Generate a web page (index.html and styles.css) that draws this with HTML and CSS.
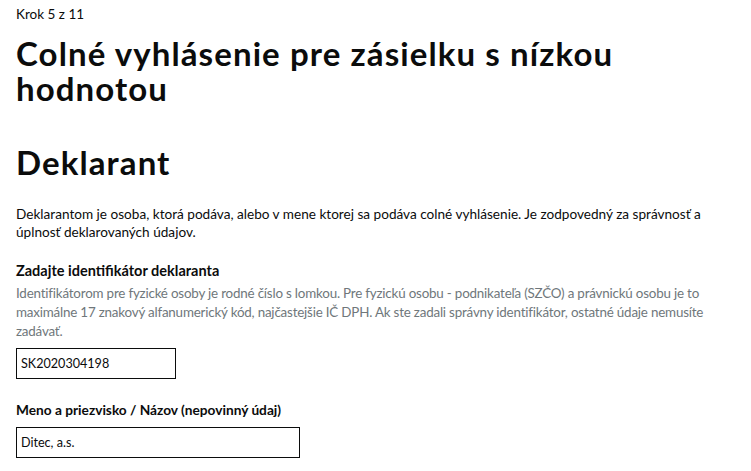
FILE: index.html
```html
<!DOCTYPE html>
<html lang="sk">
<head>
<meta charset="utf-8">
<title>Deklarant</title>
<link rel="stylesheet" href="styles.css">
</head>
<body>
<main class="page">
  <span class="caption">Krok 5 z 11</span>
  <h1 class="title">Colné vyhlásenie pre zásielku s nízkou hodnotou</h1>
  <h2 class="section">Deklarant</h2>
  <p class="body">Deklarantom je osoba, ktorá podáva, alebo v mene ktorej sa podáva colné vyhlásenie. Je zodpovedný za správnosť a úplnosť deklarovaných údajov.</p>
  <div class="field">
    <label class="label" for="id">Zadajte identifikátor deklaranta</label>
    <span class="hint">Identifikátorom pre fyzické osoby je rodné číslo s lomkou. Pre fyzickú osobu - podnikateľa (SZČO) a právnickú osobu je to maximálne 17 znakový alfanumerický kód, najčastejšie IČ DPH. Ak ste zadali správny identifikátor, ostatné údaje nemusíte zadávať.</span>
    <input class="input input-short" id="id" type="text" value="SK2020304198">
  </div>
  <div class="field">
    <label class="label label-second" for="name">Meno a priezvisko / Názov (nepovinný údaj)</label>
    <input class="input input-long" id="name" type="text" value="Ditec, a.s.">
  </div>
</main>
</body>
</html>
```

FILE: styles.css
```css
* { box-sizing: border-box; }
html, body { margin: 0; padding: 0; background: #fff; }
body {
  font-family: "Lato", "Liberation Sans", sans-serif;
  color: #0b0c0c;
}
.page {
  padding: 6px 16px 0 16px;
  width: 740px;
  display: flex;
  flex-direction: column;
  align-items: flex-start;
}
.caption {
  font-size: 13.5px;
  line-height: 16px;
}
.title {
  margin: 14px 0 0 0;
  font-size: 33px;
  line-height: 35px;
  font-weight: 700;
  letter-spacing: 1.1px;
  width: 690px;
}
.section {
  margin: 38px 0 0 0;
  font-size: 33px;
  line-height: 36px;
  font-weight: 700;
  letter-spacing: 1.1px;
}
.body {
  margin: 25px 0 0 0;
  font-size: 13.6px;
  line-height: 18px;
  width: 705px;
}
.field {
  display: flex;
  flex-direction: column;
  align-items: flex-start;
  margin-top: 21px;
}
.field + .field { margin-top: 22px; }
.label {
  font-size: 14.5px;
  line-height: 18px;
  font-weight: 700;
}
.label-second { font-size: 13.7px; }
.hint {
  margin-top: 4px;
  font-size: 13.4px;
  letter-spacing: -0.2px;
  line-height: 19px;
  color: #6f777b;
  width: 705px;
}
.input {
  margin-top: 7px;
  height: 31px;
  border: 1px solid #0b0c0c;
  border-radius: 0;
  padding: 0 4px;
  font-family: inherit;
  font-size: 12.6px;
  color: #0b0c0c;
  background: #fff;
}
.field + .field .input { margin-top: 8px; }
.input-short { width: 160px; }
.input-long { width: 284px; }
```
